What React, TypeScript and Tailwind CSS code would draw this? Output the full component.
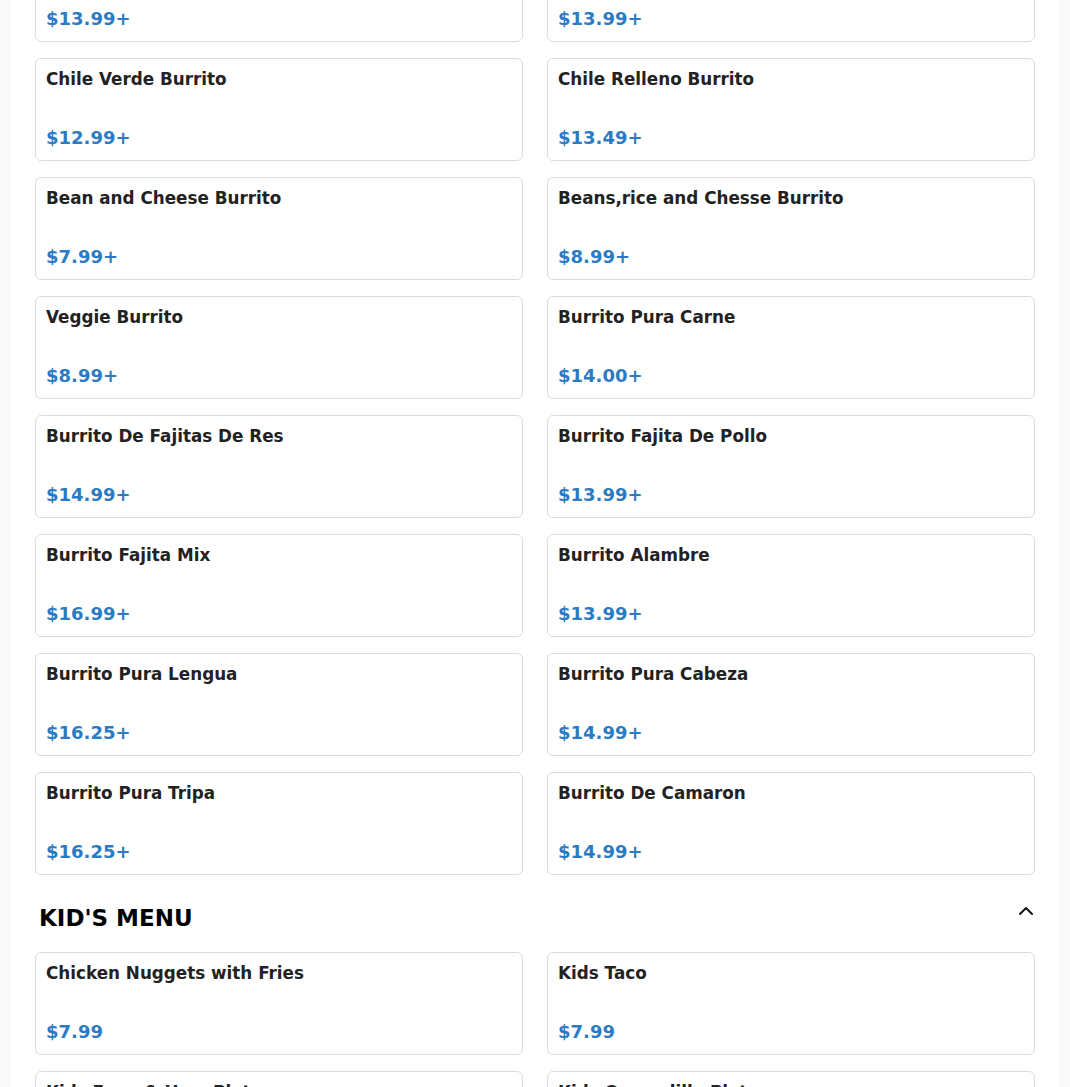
import React from "react";

type Item = { name: string; price: string };

const burritos: Item[] = [
  { name: "Burrito", price: "$13.99+" },
  { name: "Burrito", price: "$13.99+" },
  { name: "Chile Verde Burrito", price: "$12.99+" },
  { name: "Chile Relleno Burrito", price: "$13.49+" },
  { name: "Bean and Cheese Burrito", price: "$7.99+" },
  { name: "Beans,rice and Chesse Burrito", price: "$8.99+" },
  { name: "Veggie Burrito", price: "$8.99+" },
  { name: "Burrito Pura Carne", price: "$14.00+" },
  { name: "Burrito De Fajitas De Res", price: "$14.99+" },
  { name: "Burrito Fajita De Pollo", price: "$13.99+" },
  { name: "Burrito Fajita Mix", price: "$16.99+" },
  { name: "Burrito Alambre", price: "$13.99+" },
  { name: "Burrito Pura Lengua", price: "$16.25+" },
  { name: "Burrito Pura Cabeza", price: "$14.99+" },
  { name: "Burrito Pura Tripa", price: "$16.25+" },
  { name: "Burrito De Camaron", price: "$14.99+" },
];

const kids: Item[] = [
  { name: "Chicken Nuggets with Fries", price: "$7.99" },
  { name: "Kids Taco", price: "$7.99" },
  { name: "Kids Eggs & Ham Plate", price: "$7.99" },
  { name: "Kids Quesadilla Plate", price: "$7.99" },
];

function Card({ item }: { item: Item }) {
  return (
    <div className="flex h-[103px] flex-col justify-between rounded-[6px] border border-[#dcdcdc] bg-white px-[10px] pt-[9px] pb-[10px]">
      <div className="text-[16.8px] font-bold leading-[22px] text-[#222222]">{item.name}</div>
      <div className="text-[18px] font-bold leading-[24px] text-[#2b7bc4]">{item.price}</div>
    </div>
  );
}

export default function App() {
  return (
    <div
      className="h-[1087px] overflow-hidden bg-[#fafafa]"
      style={{ fontFamily: '"DejaVu Sans", sans-serif' }}
    >
      <div className="mx-[11px] min-h-[1200px] bg-white px-[24px]">
        <div className="-mt-[61px] grid grid-cols-2 gap-x-[24px] gap-y-[16px]">
          {burritos.map((it, i) => (
            <Card key={i} item={it} />
          ))}
        </div>
        <div className="flex h-[77px] items-start justify-between pt-[29px] pl-[4px]">
          <h2 className="text-[23px] font-bold leading-[28px] text-black">KID'S MENU</h2>
          <svg
            width="24"
            height="24"
            viewBox="0 0 24 24"
            fill="none"
            stroke="#111"
            strokeWidth="2"
            strokeLinecap="round"
            strokeLinejoin="round"
            className="-mt-[5px] -mr-[3px]"
          >
            <path d="M6 15l6-6 6 6" />
          </svg>
        </div>
        <div className="grid grid-cols-2 gap-x-[24px] gap-y-[16px]">
          {kids.map((it, i) => (
            <Card key={i} item={it} />
          ))}
        </div>
      </div>
    </div>
  );
}
